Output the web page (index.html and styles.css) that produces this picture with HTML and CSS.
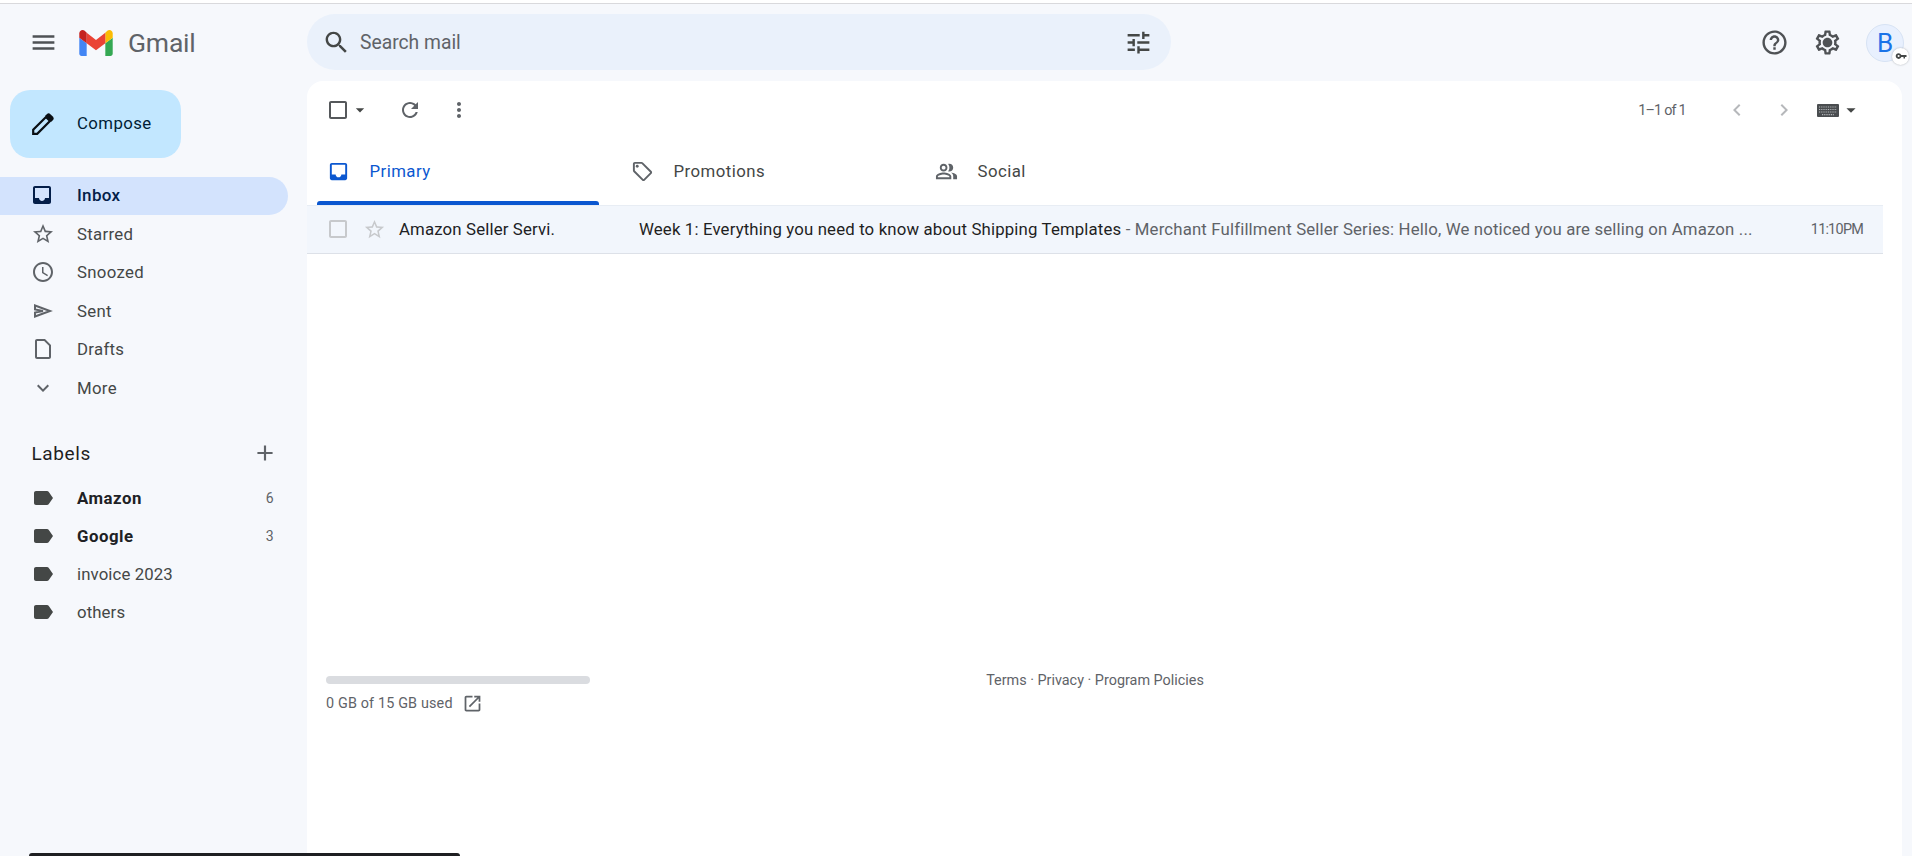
FILE: index.html
```html
<!DOCTYPE html>
<html lang="en">
<head>
<meta charset="utf-8">
<title>Inbox - Gmail</title>
<link rel="stylesheet" href="styles.css">
</head>
<body>
<div class="topline"></div>
<div class="app">
  <header class="brand">
    <svg class="ic ic-menu" viewBox="0 0 24 24"><path d="M3 18h18v-2H3v2zm0-5h18v-2H3v2zm0-7v2h18V6H3z"/></svg>
    <svg class="logo" viewBox="0 0 52 42"><path fill="#4285f4" d="M3.5 42h8V22L0 13.5v25C0 40.4 1.6 42 3.5 42z"/><path fill="#34a853" d="M40.5 42h8c1.9 0 3.5-1.6 3.5-3.5v-25L40.5 22z"/><path fill="#fbbc04" d="M40.5 6v16L52 13.5V7c0-4.3-4.9-6.8-8.4-4.2z"/><path fill="#ea4335" d="M11.5 22V6L26 17 40.5 6v16L26 33z"/><path fill="#c5221f" d="M0 7v6.5L11.5 22V6L8.4 2.8C4.9.2 0 2.7 0 7z"/></svg>
    <span class="wordmark">Gmail</span>
  </header>
  <div class="topbar">
    <div class="search">
      <svg class="ic ic-search" viewBox="0 0 24 24"><path d="M15.5 14h-.79l-.28-.27C15.41 12.59 16 11.11 16 9.5 16 5.91 13.09 3 9.5 3S3 5.91 3 9.5 5.91 16 9.5 16c1.61 0 3.09-.59 4.23-1.57l.27.28v.79l5 4.99L20.49 19l-4.99-5zm-6 0C7.01 14 5 11.99 5 9.5S7.01 5 9.5 5 14 7.01 14 9.5 11.99 14 9.5 14z"/></svg>
      <span class="search-text">Search mail</span>
      <svg class="ic ic-tune" viewBox="0 0 24 24"><path d="M3 17v2h6v-2H3zM3 5v2h10V5H3zm10 16v-2h8v-2h-8v-2h-2v6h2zM7 9v2H3v2h4v2h2V9H7zm14 4v-2H11v2h10zm-6-4h2V7h4V5h-4V3h-2v6z"/></svg>
    </div>
    <div class="account">
      <svg class="ic ic-top" viewBox="0 0 24 24"><path d="M11 18h2v-2h-2v2zm1-16C6.48 2 2 6.48 2 12s4.48 10 10 10 10-4.48 10-10S17.52 2 12 2zm0 18c-4.41 0-8-3.59-8-8s3.59-8 8-8 8 3.59 8 8-3.59 8-8 8zm0-14c-2.21 0-4 1.79-4 4h2c0-1.1.9-2 2-2s2 .9 2 2c0 2-3 1.75-3 5h2c0-2.25 3-2.5 3-5 0-2.21-1.79-4-4-4z"/></svg>
      <svg class="ic ic-top" viewBox="0 0 24 24"><path d="M19.43 12.98c.04-.32.07-.64.07-.98s-.03-.66-.07-.98l2.11-1.65c.19-.15.24-.42.12-.64l-2-3.46c-.12-.22-.39-.3-.61-.22l-2.49 1c-.52-.4-1.08-.73-1.69-.98l-.38-2.65C14.46 2.18 14.25 2 14 2h-4c-.25 0-.46.18-.49.42l-.38 2.65c-.61.25-1.17.59-1.69.98l-2.49-1c-.23-.09-.49 0-.61.22l-2 3.46c-.13.22-.07.49.12.64l2.11 1.65c-.04.32-.07.65-.07.98s.03.66.07.98l-2.11 1.65c-.19.15-.24.42-.12.64l2 3.46c.12.22.39.3.61.22l2.49-1c.52.4 1.08.73 1.69.98l.38 2.65c.03.24.24.42.49.42h4c.25 0 .46-.18.49-.42l.38-2.65c.61-.25 1.17-.59 1.69-.98l2.49 1c.23.09.49 0 .61-.22l2-3.46c.12-.22.07-.49-.12-.64l-2.11-1.65zM17.45 11.27c.04.31.05.52.05.73 0 .21-.02.43-.05.73l-.14 1.13.89.7 1.08.84-.7 1.21-1.27-.51-1.04-.42-.9.68c-.43.32-.84.56-1.25.73l-1.06.43-.16 1.13-.2 1.35h-1.4l-.19-1.35-.16-1.13-1.06-.43c-.43-.18-.83-.41-1.23-.71l-.91-.7-1.06.43-1.27.51-.7-1.21 1.08-.84.89-.7-.14-1.13c-.03-.31-.05-.54-.05-.74s.02-.43.05-.73l.14-1.13-.89-.7-1.08-.84.7-1.21 1.27.51 1.04.42.9-.68c.43-.32.84-.56 1.25-.73l1.06-.43.16-1.13.2-1.35h1.39l.19 1.35.16 1.13 1.06.43c.43.18.83.41 1.23.71l.91.7 1.06-.43 1.27-.51.7 1.21-1.07.85-.89.7.14 1.13zM12 8c-2.21 0-4 1.79-4 4s1.79 4 4 4 4-1.79 4-4-1.79-4-4-4z"/></svg>
      <div class="avatar">B
        <span class="badge"><svg class="ic-key" viewBox="0 0 24 12"><path d="M12.6 4.2C11.8 2 9.7.4 7.2.4 4 .4 1.4 3 1.4 6.1s2.6 5.7 5.8 5.7c2.5 0 4.6-1.6 5.4-3.8H17v3h3V8h3V4.2H12.6zM7.2 8.2a2.1 2.1 0 1 1 0-4.2 2.1 2.1 0 0 1 0 4.2z"/></svg></span>
      </div>
    </div>
  </div>

  <aside class="side">
    <button class="compose">
      <svg class="ic-pen" viewBox="0 0 23 22"><path class="pen-body" d="M1.2 20.8v-4L14 4l4 4L5.2 20.8z"/><path d="M13.2 2.8l1.6-1.6a2.6 2.6 0 0 1 3.6 0l2.4 2.4a2.6 2.6 0 0 1 0 3.6l-1.6 1.6z"/></svg>
      <span>Compose</span>
    </button>
    <nav class="nav">
      <a class="nav-item active"><svg class="ic" viewBox="0 0 24 24"><path d="M19 3H5c-1.1 0-2 .9-2 2v14c0 1.1.9 2 2 2h14c1.1 0 2-.9 2-2V5c0-1.1-.9-2-2-2zm0 12h-4c0 1.66-1.34 3-3 3s-3-1.34-3-3H5V5h14v10z"/></svg><span>Inbox</span></a>
      <a class="nav-item"><svg class="ic" viewBox="0 0 24 24"><path d="M22 9.24l-7.19-.62L12 2 9.19 8.63 2 9.24l5.46 4.73L5.82 21 12 17.27 18.18 21l-1.63-7.03L22 9.24zM12 15.4l-3.76 2.27 1-4.28-3.32-2.88 4.38-.38L12 6.1l1.71 4.04 4.38.38-3.32 2.88 1 4.28L12 15.4z"/></svg><span>Starred</span></a>
      <a class="nav-item"><svg class="ic" viewBox="0 0 24 24"><path d="M11.99 2C6.47 2 2 6.48 2 12s4.47 10 9.99 10C17.52 22 22 17.52 22 12S17.52 2 11.99 2zM12 20c-4.42 0-8-3.58-8-8s3.58-8 8-8 8 3.58 8 8-3.58 8-8 8zm.5-13H11v6l5.25 3.15.75-1.23-4.5-2.67z"/></svg><span>Snoozed</span></a>
      <a class="nav-item"><svg class="ic" viewBox="0 0 24 24"><path class="sent-plane" d="M4 6.5L19 12 4 17.5v-4l8-1.5-8-1.5z"/></svg><span>Sent</span></a>
      <a class="nav-item"><svg class="ic" viewBox="0 0 24 24"><path d="M6 2c-1.1 0-2 .9-2 2v16c0 1.1.9 2 2 2h12c1.1 0 2-.9 2-2V8l-6-6H6zm0 2h7.17L18 8.83V20H6V4z"/></svg><span>Drafts</span></a>
      <a class="nav-item"><svg class="ic" viewBox="0 0 24 24"><path d="M16.59 8.59L12 13.17 7.41 8.59 6 10l6 6 6-6z"/></svg><span>More</span></a>
    </nav>
    <div class="labels-head">
      <span>Labels</span>
      <svg class="ic" viewBox="0 0 24 24"><path d="M19 13h-6v6h-2v-6H5v-2h6V5h2v6h6v2z"/></svg>
    </div>
    <div class="labels">
      <a class="label-item bold"><svg class="ic" viewBox="0 0 24 24"><path d="M17.63 5.84C17.27 5.33 16.67 5 16 5L5 5.01C3.9 5.01 3 5.9 3 7v10c0 1.1.9 1.99 2 1.99L16 19c.67 0 1.27-.33 1.63-.84L22 12l-4.37-6.16z"/></svg><span class="label-name">Amazon</span><span class="count">6</span></a>
      <a class="label-item bold"><svg class="ic" viewBox="0 0 24 24"><path d="M17.63 5.84C17.27 5.33 16.67 5 16 5L5 5.01C3.9 5.01 3 5.9 3 7v10c0 1.1.9 1.99 2 1.99L16 19c.67 0 1.27-.33 1.63-.84L22 12l-4.37-6.16z"/></svg><span class="label-name">Google</span><span class="count">3</span></a>
      <a class="label-item"><svg class="ic" viewBox="0 0 24 24"><path d="M17.63 5.84C17.27 5.33 16.67 5 16 5L5 5.01C3.9 5.01 3 5.9 3 7v10c0 1.1.9 1.99 2 1.99L16 19c.67 0 1.27-.33 1.63-.84L22 12l-4.37-6.16z"/></svg><span class="label-name">invoice 2023</span></a>
      <a class="label-item"><svg class="ic" viewBox="0 0 24 24"><path d="M17.63 5.84C17.27 5.33 16.67 5 16 5L5 5.01C3.9 5.01 3 5.9 3 7v10c0 1.1.9 1.99 2 1.99L16 19c.67 0 1.27-.33 1.63-.84L22 12l-4.37-6.16z"/></svg><span class="label-name">others</span></a>
    </div>
  </aside>

  <main class="panel">
    <div class="toolbar">
      <svg class="ic ic-check" viewBox="0 0 24 24"><path d="M19 5v14H5V5h14m0-2H5c-1.1 0-2 .9-2 2v14c0 1.1.9 2 2 2h14c1.1 0 2-.9 2-2V5c0-1.1-.9-2-2-2z"/></svg>
      <svg class="ic ic-caret" viewBox="0 0 24 24"><path d="M7 10l5 5 5-5z"/></svg>
      <svg class="ic ic-refresh" viewBox="0 0 24 24"><path d="M17.65 6.35C16.2 4.9 14.21 4 12 4c-4.42 0-7.99 3.58-7.99 8s3.57 8 7.99 8c3.73 0 6.84-2.55 7.73-6h-2.08c-.82 2.33-3.04 4-5.65 4-3.31 0-6-2.69-6-6s2.69-6 6-6c1.66 0 3.14.69 4.22 1.78L13 11h7V4l-2.35 2.35z"/></svg>
      <svg class="ic ic-dots" viewBox="0 0 24 24"><path d="M12 8c1.1 0 2-.9 2-2s-.9-2-2-2-2 .9-2 2 .9 2 2 2zm0 2c-1.1 0-2 .9-2 2s.9 2 2 2 2-.9 2-2-.9-2-2-2zm0 6c-1.1 0-2 .9-2 2s.9 2 2 2 2-.9 2-2-.9-2-2-2z"/></svg>
      <span class="pager">1–1 of 1</span>
      <svg class="ic ic-chev" viewBox="0 0 24 24"><path d="M15.41 7.41L14 6l-6 6 6 6 1.41-1.41L10.83 12z"/></svg>
      <svg class="ic ic-chev" viewBox="0 0 24 24"><path d="M10 6L8.59 7.41 13.17 12l-4.58 4.59L10 18l6-6z"/></svg>
      <svg class="ic-kbd" viewBox="0 0 22 13"><rect width="22" height="13" rx="1" fill="#4a4d50"/><path d="M2 3h18M2 5.5h18M2 8h18M5 10.6h12" stroke="#b4b7ba" stroke-width="1.1" stroke-dasharray="1 .8" fill="none"/></svg>
      <svg class="ic ic-caret2" viewBox="0 0 24 24"><path d="M7 10l5 5 5-5z"/></svg>
    </div>
    <div class="tabs">
      <div class="tab active"><svg class="ic" viewBox="0 0 24 24"><path d="M19 3H5c-1.1 0-2 .9-2 2v14c0 1.1.9 2 2 2h14c1.1 0 2-.9 2-2V5c0-1.1-.9-2-2-2zm0 12h-4c0 1.66-1.34 3-3 3s-3-1.34-3-3H5V5h14v10z"/></svg><span>Primary</span></div>
      <div class="tab"><svg class="ic" viewBox="0 0 24 24"><path d="M21.41 11.58l-9-9C12.05 2.22 11.55 2 11 2H4c-1.1 0-2 .9-2 2v7c0 .55.22 1.05.59 1.42l9 9c.36.36.86.58 1.41.58s1.05-.22 1.41-.59l7-7c.37-.36.59-.86.59-1.41s-.23-1.06-.59-1.42zM13 20.01L4 11V4h7v-.01l9 9-7 7.02z"/><circle cx="6.5" cy="6.5" r="1.5"/></svg><span>Promotions</span></div>
      <div class="tab"><svg class="ic" viewBox="0 0 24 24"><path d="M16.67 13.13C18.04 14.06 19 15.32 19 17v3h4v-3c0-2.18-3.57-3.47-6.33-3.87zM15 12c2.21 0 4-1.79 4-4s-1.79-4-4-4c-.47 0-.91.1-1.33.24C14.5 5.27 15 6.58 15 8s-.5 2.73-1.33 3.76c.42.14.86.24 1.33.24zM9 12c2.21 0 4-1.79 4-4s-1.79-4-4-4-4 1.79-4 4 1.79 4 4 4zm0-6c1.1 0 2 .9 2 2s-.9 2-2 2-2-.9-2-2 .9-2 2-2zm0 7c-2.67 0-8 1.34-8 4v3h16v-3c0-2.66-5.33-4-8-4zm6 5H3v-.99C3.2 16.29 6.3 15 9 15s5.8 1.29 6 2v1z"/></svg><span>Social</span></div>
    </div>
    <div class="mail-row">
      <svg class="ic ic-rowcheck" viewBox="0 0 24 24"><path d="M19 5v14H5V5h14m0-2H5c-1.1 0-2 .9-2 2v14c0 1.1.9 2 2 2h14c1.1 0 2-.9 2-2V5c0-1.1-.9-2-2-2z"/></svg>
      <svg class="ic ic-rowstar" viewBox="0 0 24 24"><path d="M22 9.24l-7.19-.62L12 2 9.19 8.63 2 9.24l5.46 4.73L5.82 21 12 17.27 18.18 21l-1.63-7.03L22 9.24zM12 15.4l-3.76 2.27 1-4.28-3.32-2.88 4.38-.38L12 6.1l1.71 4.04 4.38.38-3.32 2.88 1 4.28L12 15.4z"/></svg>
      <span class="sender">Amazon Seller Servi.</span>
      <span class="subject">Week 1: Everything you need to know about Shipping Templates</span>
      <span class="snippet"> - Merchant Fulfillment Seller Series: Hello, We noticed you are selling on Amazon ...</span>
      <span class="time">11:10 PM</span>
    </div>
    <div class="foot">
      <div class="storage">
        <div class="bar"></div>
        <div class="used"><span>0 GB of 15 GB used</span><svg class="ic" viewBox="0 0 24 24"><path d="M19 19H5V5h7V3H5c-1.11 0-2 .9-2 2v14c0 1.1.89 2 2 2h14c1.1 0 2-.9 2-2v-7h-2v7zM14 3v2h3.59l-9.83 9.83 1.41 1.41L19 6.41V10h2V3h-7z"/></svg></div>
      </div>
      <div class="terms">Terms · Privacy · Program Policies</div>
    </div>
  </main>
</div>
<div class="dock"></div>
</body>
</html>
```
FILE: styles.css
```css
* { box-sizing: border-box; }
html, body { margin: 0; height: 100%; }
body {
  height: 856px;
  overflow: hidden;
  background: #f6f8fc;
  font-family: Roboto, "Liberation Sans", sans-serif;
  color: #444746;
  position: relative;
}
svg { display: block; flex: none; fill: currentColor; }
.topline { height: 4px; background: #fff; border-bottom: 1px solid #d9d9dc; }
.app {
  display: grid;
  grid-template-columns: 307px 1fr;
  grid-template-rows: 77px 1fr;
  height: 852px;
}
.ic { width: 24px; height: 24px; color: #444746; }

/* brand */
.brand { display: flex; align-items: center; padding: 0 0 0 29px; }
.ic-menu { width: 29px; height: 29px; color: #4f5255; }
.logo { width: 36px; height: 27px; margin-left: 20px; }
.wordmark { margin-left: 14px; font-size: 26.5px; color: #5f6368; letter-spacing: -.2px; }

/* top bar */
.topbar { display: flex; align-items: center; justify-content: space-between; padding-right: 8px; }
.search {
  width: 864px; height: 56px;
  display: flex; align-items: center;
  background: #eaf1fb; border-radius: 28px;
  padding: 0 18px 0 15px;
  align-self: flex-start; margin-top: 10px;
}
.ic-search { width: 29px; height: 29px; }
.search-text { flex: 1; margin-left: 9px; font-size: 19.3px; color: #5f6368; }
.ic-tune { width: 29px; height: 29px; }
.account { display: flex; align-items: center; }
.ic-top { width: 29px; height: 29px; margin-right: 24px; color: #4f5255; }
.avatar {
  position: relative; width: 38px; height: 38px; border-radius: 50%;
  background: #e8f0fe; color: #1a73e8; font-size: 26px;
  display: flex; align-items: center; justify-content: center;
  border: 1px solid #d7e3f4;
}
.badge {
  position: absolute; right: -6px; bottom: -4px; width: 17px; height: 17px;
  border-radius: 50%; background: #fff; color: #444746;
  display: flex; align-items: center; justify-content: center;
  box-shadow: 0 0 2px rgba(60,64,67,.4);
}
.ic-key { width: 12px; height: 6px; }

/* sidebar */
.side { display: flex; flex-direction: column; }
.compose {
  width: 171px; height: 68px; margin: 9px 0 0 10px;
  display: flex; align-items: center; gap: 22px;
  padding: 0 0 2px 22px;
  border: 0; border-radius: 20px;
  background: #c2e7ff; color: #001d35;
  font: 400 16.8px Roboto, sans-serif; letter-spacing: .4px;
}
.ic-pen { width: 23px; height: 22px; color: #0a0f14; margin-top: 2px; }
.pen-body { fill: none; stroke: currentColor; stroke-width: 2.2px; }
.nav { margin-top: 19px; display: flex; flex-direction: column; }
.nav-item {
  display: flex; align-items: center; gap: 22px;
  height: 38.4px; width: 288px; padding: 0 0 1px 31px;
  font-size: 16.8px; letter-spacing: .3px; color: #444746;
}
.nav-item .ic { color: #5f6368; flex: none; }
.sent-plane { fill: none; stroke: currentColor; stroke-width: 2px; }
.nav-item.active {
  background: #d3e3fd; border-radius: 0 20px 20px 0;
  color: #041e49; font-weight: 500; font-size: 17px; padding-bottom: 2px;
}
.nav-item.active .ic { color: #041e49; margin-left: -1px; margin-right: 1px; }
.labels-head {
  display: flex; align-items: center; justify-content: space-between;
  height: 30px; margin-top: 31px; padding: 0 29px 0 31.5px;
  font-size: 19px; letter-spacing: .6px; color: #1f1f1f;
}
.labels-head .ic { width: 26px; height: 26px; color: #5f6368; }
.labels { margin-top: 10.5px; display: flex; flex-direction: column; }
.label-item {
  display: flex; align-items: center; gap: 22px;
  height: 38px; padding: 0 33px 0 31px; font-size: 16.8px; letter-spacing: .1px; color: #444746;
}
.label-item .ic { flex: none; }
.label-item.bold { font-weight: 700; color: #202124; letter-spacing: .5px; }
.label-name { flex: 1; }
.count { font-size: 14px; font-weight: 400; color: #5f6368; }

/* main */
.panel { background: #fff; border-radius: 16px 16px 0 0; margin-right: 10px; padding-right: 19px; }
.toolbar { display: flex; align-items: center; height: 58px; padding: 0 0 0 19px; }
.ic-check { width: 24px; height: 24px; color: #55585b; }
.ic-caret { width: 20px; height: 20px; margin-left: 0; }
.ic-refresh { width: 24px; height: 24px; margin-left: 28px; color: #5f6368; }
.ic-dots { width: 24px; height: 24px; margin-left: 25px; color: #5f6368; }
.pager { margin-left: auto; font-size: 14.4px; letter-spacing: -.8px; color: #5f6368; }
.ic-chev { width: 24px; height: 24px; color: #b6b8bb; margin-left: 23px; }
.pager + .ic-chev { margin-left: 39px; }
.ic-kbd { width: 22px; height: 13px; margin-left: 21px; }
.ic-caret2 { width: 22px; height: 22px; margin-left: 1.6px; margin-right: 20.6px; }
.tabs { display: flex; height: 66px; margin-left: 10px; }
.tab {
  width: 304px; display: flex; align-items: center; gap: 19.5px;
  padding: 0 0 2px 10px; font-size: 16.8px; letter-spacing: .45px; color: #444746;
  position: relative;
}
.tab .ic { width: 23px; height: 23px; color: #5f6368; }
.tab.active { color: #0b57d0; }
.tab.active .ic { color: #0b57d0; }
.tab.active::after {
  content: ""; position: absolute; left: 0; right: 22px; bottom: 0; height: 4px;
  background: #0b57d0; border-radius: 3px 3px 0 0;
}
.mail-row {
  display: flex; align-items: center; height: 49px;
  background: #f2f6fc; border-top: 1px solid #e8edf4; border-bottom: 1px solid #dde1e8;
  padding: 0 20px 1px 19px; font-size: 16.8px; letter-spacing: .15px; color: #202124; white-space: pre;
}
.ic-rowcheck { width: 24px; height: 24px; color: #c7c9cc; }
.ic-rowstar { width: 23px; height: 23px; color: #c7c9cc; margin-left: 13px; }
.sender { width: 240px; margin-left: 13px; }
.subject { color: #1f1f1f; }
.snippet { flex: 1; color: #5f6368; }
.time { font-size: 14.4px; color: #5f6368; letter-spacing: -.8px; word-spacing: -2.5px; }
.foot { display: grid; grid-template-columns: 1fr auto 1fr; margin-top: 422px; padding: 0 19px; }
.bar { width: 264px; height: 8px; border-radius: 4px; background: #dadce0; }
.used { display: flex; align-items: center; gap: 9.5px; margin-top: 9px; font-size: 14.4px; letter-spacing: .15px; color: #5f6368; }
.used .ic { width: 21px; height: 21px; color: #5f6368; }
.terms { font-size: 14.4px; color: #5f6368; line-height: 8px; padding-top: 1px; }
.dock {
  position: absolute; left: 29px; bottom: 0; width: 431px; height: 3px;
  background: #1e1f22; border-radius: 4px 4px 0 0;
}
```
